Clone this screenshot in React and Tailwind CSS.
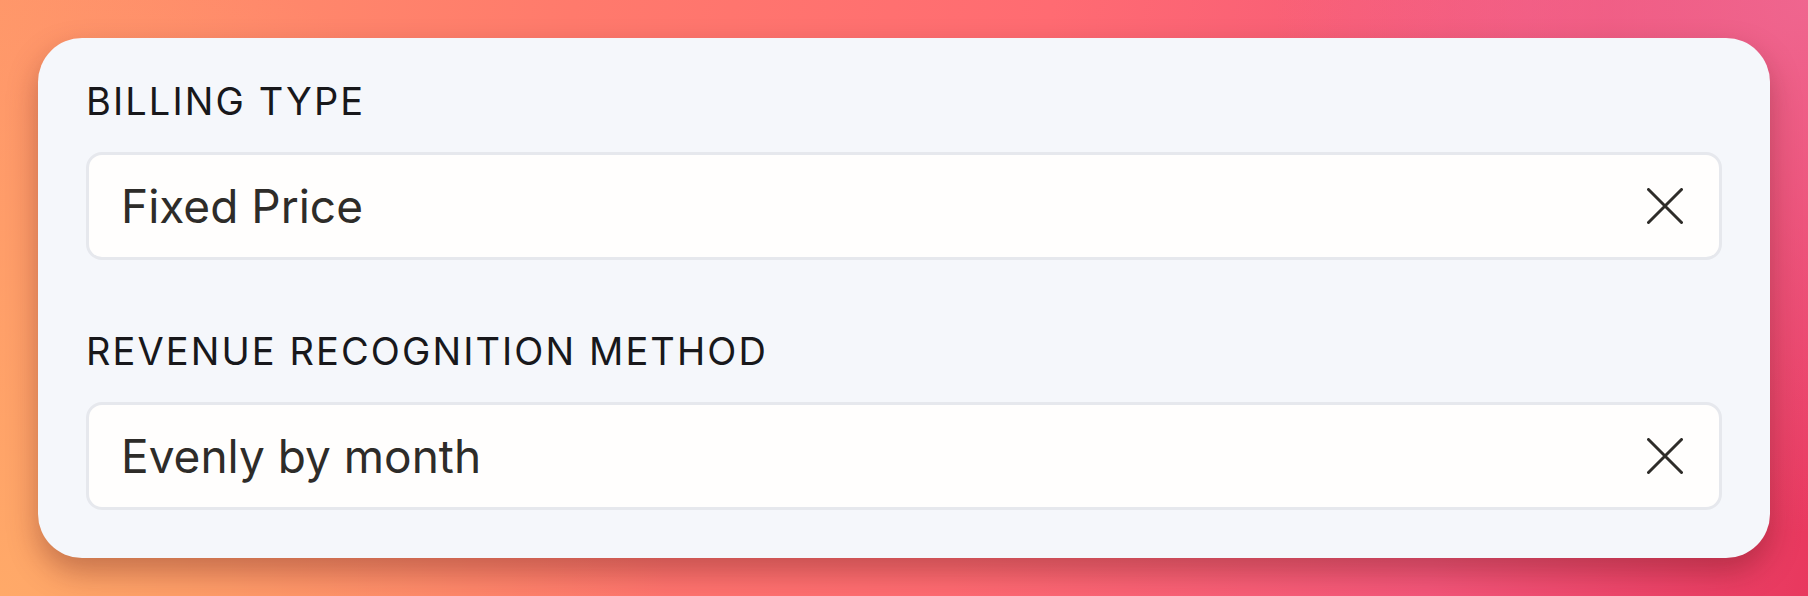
const fields = [
  { label: 'Billing Type', value: 'Fixed Price' },
  { label: 'Revenue Recognition Method', value: 'Evenly by month' },
];

const ClearIcon = () => (
  <svg width="36" height="36" viewBox="0 0 36 36" fill="none" className="shrink-0">
    <path d="M1.5 1.5L34.5 34.5M34.5 1.5L1.5 34.5" stroke="#2e2c29" strokeWidth="3" strokeLinecap="round" />
  </svg>
);

const Field = ({ label, value, first }) => (
  <div className={first ? '' : 'mt-[68px]'}>
    <div className="text-[38px] leading-[46px] uppercase tracking-[0.055em] text-[#18181b]">{label}</div>
    <div className="mt-[28px] h-[108px] flex items-center justify-between bg-[#fffefd] border-[3px] border-[#e6e8ed] rounded-[16px] pl-8 pr-9">
      <span className="text-[46px] text-[#2e2c29]">{value}</span>
      <ClearIcon />
    </div>
  </div>
);

export default function App() {
  return (
    <div
      className="w-full h-[596px] p-[38px] bg-[radial-gradient(circle_at_100%_0%,rgba(240,108,150,0.85),transparent_28%),radial-gradient(circle_at_0%_100%,rgba(255,172,104,0.9),transparent_35%),linear-gradient(100deg,#ff956a_0%,#ff7a6c_30%,#ff6b72_55%,#f4567a_80%,#e8385e_100%)]"
      style={{ fontFamily: "Inter, 'Noto Sans', sans-serif" }}
    >
      <div className="h-[520px] bg-[#f5f7fb] rounded-[44px] shadow-[0_14px_30px_rgba(90,20,20,0.35)] px-12 pt-10 pb-12 flex flex-col">
        {fields.map((f, i) => (
          <Field key={f.label} label={f.label} value={f.value} first={i === 0} />
        ))}
      </div>
    </div>
  );
}
